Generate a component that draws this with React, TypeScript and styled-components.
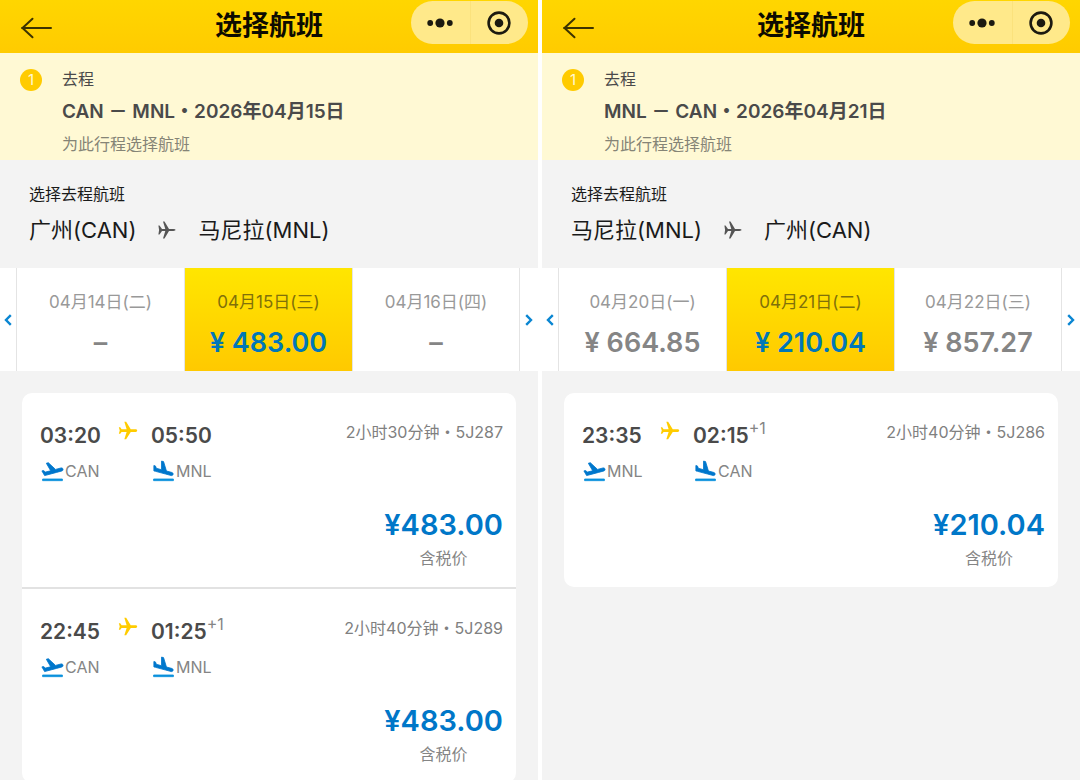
import React from 'react';
import styled, { createGlobalStyle } from 'styled-components';
import { MdFlight } from 'react-icons/md';

const GlobalStyle = createGlobalStyle`
  *, *::before, *::after { box-sizing: border-box; }
  body {
    margin: 0;
    background: #ffffff;
    color: #4a4a4a;
    font-family: Inter, "Noto Sans CJK SC", sans-serif;
    font-size: 16px;
    line-height: 24px;
  }
  h1, h2, p, ul { margin: 0; padding: 0; }
  ul { list-style: none; }
  button {
    margin: 0;
    padding: 0;
    border: 0;
    background: none;
    font: inherit;
    color: inherit;
    cursor: pointer;
  }
  svg { display: block; flex: none; }
`;

const Screens = styled.main`
  display: grid;
  grid-template-columns: 1fr 1fr;
  gap: 4px;
  height: 100vh;
`;

const Screen = styled.section`
  min-width: 0;
  overflow-x: hidden;
  overflow-y: auto;
  scrollbar-width: none;
  background: #f3f3f3;
`;

const Header = styled.header`
  display: grid;
  grid-template-columns: 1fr auto 1fr;
  align-items: center;
  height: 53px;
  padding: 0 10px 2px;
  background: linear-gradient(#ffd600, #ffcb00);
`;

const BackButton = styled.button`
  justify-self: start;
  padding: 4px 10px 0;
  color: #3d3300;
`;

const Title = styled.h1`
  color: #0d0b00;
  font-size: 27px;
  font-weight: 700;
  line-height: 40px;
`;

const Capsule = styled.div`
  justify-self: end;
  align-self: start;
  display: grid;
  grid-template-columns: 1fr 1fr;
  width: 117px;
  height: 43px;
  margin-top: 1px;
  border-radius: 22px;
  background: #ffe98a;
`;

const CapsuleButton = styled.button`
  display: flex;
  align-items: center;
  justify-content: center;
  color: #1c1a10;

  & + & {
    border-left: 1px solid #fbe27c;
  }
`;

const Trip = styled.section`
  display: flex;
  gap: 20px;
  height: 107px;
  padding: 14px 20px 0;
  background: #fff9d4;
`;

const StepNumber = styled.span`
  flex: none;
  width: 22px;
  height: 22px;
  margin-top: 2px;
  border-radius: 50%;
  background: #ffcb00;
  color: #fff9d4;
  font-size: 15px;
  line-height: 22px;
  text-align: center;
`;

const TripText = styled.div`
  display: flex;
  flex-direction: column;
  gap: 4px;
  white-space: nowrap;
`;

const TripRoute = styled.h2`
  font-size: 19px;
  font-weight: 600;
  line-height: 34px;
`;

const Hint = styled.p`
  color: #858476;
  line-height: 22px;
`;

const RouteSection = styled.section`
  height: 108px;
  padding: 22px 29px 0;
  color: #1a1a1a;
`;

const RouteLine = styled.div`
  display: flex;
  align-items: center;
  gap: 22px;
  margin-top: 8px;
  font-size: 22px;
  line-height: 32px;
  white-space: nowrap;
`;

const DateStrip = styled.nav`
  display: grid;
  grid-template-columns: 16px 1fr 1fr 1fr 18px;
  height: 103px;
  background: #ffffff;
`;

const StripArrow = styled.button`
  display: flex;
  align-items: center;
  justify-content: center;
  color: #0a86d2;
`;

const DateButton = styled.button<{ $active: boolean }>`
  display: flex;
  flex-direction: column;
  align-items: center;
  gap: 8px;
  min-width: 0;
  padding-top: 22px;
  border-left: 1px solid #e4e4e4;
  background: ${({ $active }) => ($active ? 'linear-gradient(#ffe600, #ffc900)' : '#ffffff')};
  color: ${({ $active }) => ($active ? '#80700a' : '#999999')};
  white-space: nowrap;

  &:nth-last-child(2) {
    border-right: 1px solid #e4e4e4;
  }
`;

const DateLabel = styled.span`
  font-size: 17px;
  line-height: 24px;
`;

const DatePrice = styled.span<{ $active: boolean }>`
  color: ${({ $active }) => ($active ? '#0077b8' : '#858585')};
  font-size: 27px;
  font-weight: 600;
  line-height: 42px;
`;

const Results = styled.ul`
  margin: 22px 22px 0;
  border-radius: 10px;
  background: #ffffff;
  overflow: hidden;
`;

const Flight = styled.li`
  display: flex;
  flex-direction: column;
  justify-content: space-between;
  height: 194px;
  padding: 26px 13px 17px 18px;

  & + & {
    height: 196px;
    border-top: 2px solid #e2e2e2;
  }
`;

const FlightTop = styled.div`
  display: flex;
  justify-content: space-between;
`;

const Legs = styled.div`
  display: grid;
  grid-template-columns: 77px 34px auto;
  row-gap: 5px;
`;

const Time = styled.span`
  color: #4a4a4a;
  font-size: 21px;
  font-weight: 600;
  line-height: 34px;
`;

const DayOffset = styled.sup`
  color: #858585;
  font-size: 16px;
  font-weight: 400;
  line-height: 0;
  vertical-align: 9px;
`;

const LegPlane = styled.span`
  padding-top: 1px;
  color: #ffcc00;

  svg {
    overflow: visible;
  }
`;

const Airport = styled.span<{ $wide?: boolean }>`
  grid-column: ${({ $wide }) => ($wide ? 'span 2' : 'auto')};
  display: flex;
  align-items: center;
  height: 26px;
  color: #858585;
`;

const Duration = styled.p`
  padding-top: 1px;
  color: #808080;
  white-space: nowrap;
`;

const Fare = styled.div`
  align-self: flex-end;
  color: #858585;
  text-align: center;
`;

const FarePrice = styled.p`
  color: #0077c8;
  font-size: 29px;
  font-weight: 600;
  line-height: 42px;
`;

const BackIcon = () => (
  <svg width="32" height="22" viewBox="0 0 32 22" fill="none" stroke="currentColor" strokeWidth="2" strokeLinecap="round" strokeLinejoin="round">
    <path d="M31 11H2M12.5 1.8L2.5 11L12.5 20.2" />
  </svg>
);

const MoreIcon = () => (
  <svg width="26" height="10" viewBox="0 0 26 10" fill="currentColor">
    <circle cx="3.2" cy="5" r="2.9" />
    <circle cx="13" cy="5" r="4.6" />
    <circle cx="22.8" cy="5" r="2.9" />
  </svg>
);

const TargetIcon = () => (
  <svg width="24" height="24" viewBox="0 0 24 24" fill="none" stroke="currentColor" strokeWidth="2.6">
    <circle cx="12" cy="12" r="10.4" />
    <circle cx="12" cy="12" r="4.3" fill="currentColor" stroke="none" />
  </svg>
);

const Chevron = ({ direction }: { direction: 'left' | 'right' }) => (
  <svg width="8" height="12" viewBox="0 0 8 12" fill="none" stroke="currentColor" strokeWidth="2.4">
    <path d={direction === 'left' ? 'M6.8 1.2L2 6L6.8 10.8' : 'M1.2 1.2L6 6L1.2 10.8'} />
  </svg>
);

const RoutePlane = () => (
  <svg width="18" height="18" viewBox="0 0 18 18" fill="#555555">
    <path d="M0.4 4.6H1.5L4 8.1H7.3L5 0.4H6.5L11 8.1H15.4Q17.6 8.3 17.6 9Q17.6 9.7 15.4 9.9H11L6.5 17.6H5L7.3 9.9H4L1.5 13.4H0.4L1.1 9Z" />
  </svg>
);

const AirportIcon = ({ plane }: { plane: string }) => (
  <svg width="25" height="25" viewBox="0 0 24 24" fill="#0077cc" stroke="#0077cc" strokeWidth="0.8" strokeLinejoin="round">
    <path d={plane} />
    <rect x="2.5" y="19.2" width="19" height="1.6" fill="#0a90dc" stroke="#0a90dc" />
  </svg>
);

const takeoffPlane =
  'M22.07 9.64c-.21-.8-1.04-1.28-1.84-1.06L14.92 10l-6.9-6.43-1.93.51 4.14 7.17-4.97 1.33-1.97-1.54-1.45.39 2.59 4.49 6.91-1.85 4.35-1.16L21 11.49c.81-.23 1.28-1.05 1.07-1.85z';
const landingPlane =
  'M9.68 13.27l4.35 1.16 5.31 1.42c.8.21 1.62-.26 1.84-1.06.21-.8-.26-1.62-1.06-1.84l-5.31-1.42-2.76-9.02L10.12 2v8.28L5.15 8.95l-.93-2.32-1.45-.39v5.17l1.6.43 5.31 1.43z';

interface DateOption {
  label: string;
  price: string;
}

interface FlightInfo {
  depart: string;
  arrive: string;
  nextDay?: boolean;
  duration: string;
  price: string;
}

interface TripInfo {
  from: { code: string; city: string };
  to: { code: string; city: string };
  date: string;
  dates: DateOption[];
  flights: FlightInfo[];
}

const trips: TripInfo[] = [
  {
    from: { code: 'CAN', city: '广州' },
    to: { code: 'MNL', city: '马尼拉' },
    date: '2026年04月15日',
    dates: [
      { label: '04月14日(二)', price: '–' },
      { label: '04月15日(三)', price: '¥ 483.00' },
      { label: '04月16日(四)', price: '–' },
    ],
    flights: [
      { depart: '03:20', arrive: '05:50', duration: '2小时30分钟・5J287', price: '¥483.00' },
      { depart: '22:45', arrive: '01:25', nextDay: true, duration: '2小时40分钟・5J289', price: '¥483.00' },
    ],
  },
  {
    from: { code: 'MNL', city: '马尼拉' },
    to: { code: 'CAN', city: '广州' },
    date: '2026年04月21日',
    dates: [
      { label: '04月20日(一)', price: '¥ 664.85' },
      { label: '04月21日(二)', price: '¥ 210.04' },
      { label: '04月22日(三)', price: '¥ 857.27' },
    ],
    flights: [
      { depart: '23:35', arrive: '02:15', nextDay: true, duration: '2小时40分钟・5J286', price: '¥210.04' },
    ],
  },
];

const TripScreen = ({ trip }: { trip: TripInfo }) => (
  <Screen>
    <Header>
      <BackButton type="button" aria-label="返回"><BackIcon /></BackButton>
      <Title>选择航班</Title>
      <Capsule>
        <CapsuleButton type="button" aria-label="更多"><MoreIcon /></CapsuleButton>
        <CapsuleButton type="button" aria-label="关闭"><TargetIcon /></CapsuleButton>
      </Capsule>
    </Header>
    <Trip>
      <StepNumber>1</StepNumber>
      <TripText>
        <p>去程</p>
        <TripRoute>{trip.from.code} － {trip.to.code}・{trip.date}</TripRoute>
        <Hint>为此行程选择航班</Hint>
      </TripText>
    </Trip>
    <RouteSection>
      <p>选择去程航班</p>
      <RouteLine>
        <span>{trip.from.city}({trip.from.code})</span>
        <RoutePlane />
        <span>{trip.to.city}({trip.to.code})</span>
      </RouteLine>
    </RouteSection>
    <DateStrip>
      <StripArrow type="button" aria-label="前一天"><Chevron direction="left" /></StripArrow>
      {trip.dates.map((date, index) => (
        <DateButton key={date.label} type="button" $active={index === 1}>
          <DateLabel>{date.label}</DateLabel>
          <DatePrice $active={index === 1}>{date.price}</DatePrice>
        </DateButton>
      ))}
      <StripArrow type="button" aria-label="后一天"><Chevron direction="right" /></StripArrow>
    </DateStrip>
    <Results>
      {trip.flights.map((flight) => (
        <Flight key={flight.depart}>
          <FlightTop>
            <Legs>
              <Time>{flight.depart}</Time>
              <LegPlane><MdFlight size={22} transform="rotate(90)" /></LegPlane>
              <Time>
                {flight.arrive}
                {flight.nextDay && <DayOffset>+1</DayOffset>}
              </Time>
              <Airport $wide><AirportIcon plane={takeoffPlane} />{trip.from.code}</Airport>
              <Airport><AirportIcon plane={landingPlane} />{trip.to.code}</Airport>
            </Legs>
            <Duration>{flight.duration}</Duration>
          </FlightTop>
          <Fare>
            <FarePrice>{flight.price}</FarePrice>
            <p>含税价</p>
          </Fare>
        </Flight>
      ))}
    </Results>
  </Screen>
);

export default function App() {
  return (
    <>
      <GlobalStyle />
      <Screens>
        {trips.map((trip) => (
          <TripScreen key={trip.date} trip={trip} />
        ))}
      </Screens>
    </>
  );
}
